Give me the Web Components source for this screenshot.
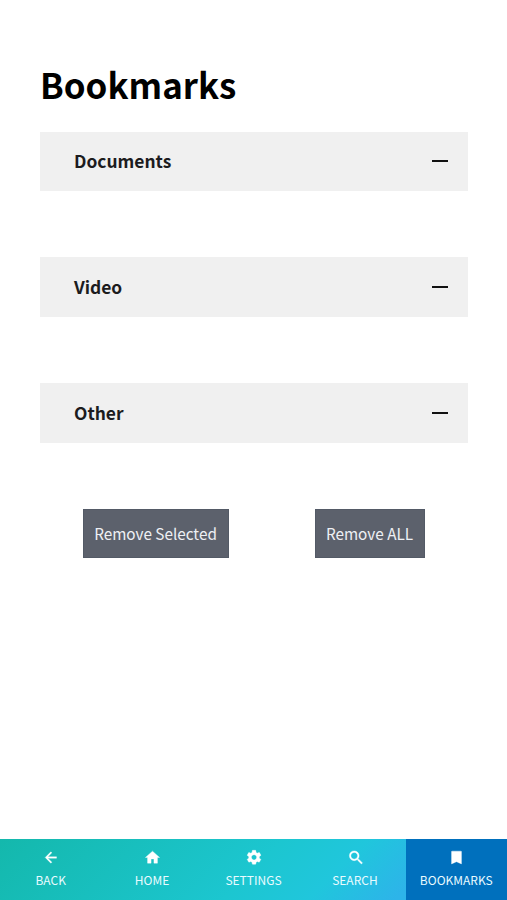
<!DOCTYPE html>
<html lang="en">
<head>
<meta charset="utf-8">
<title>Bookmarks</title>
<style>
html, body { margin: 0; height: 100%; }
body { background: #fff; font-family: "Noto Sans CJK SC", "Noto Sans", sans-serif; }
</style>
</head>
<body>
<bookmarks-page></bookmarks-page>
<script>
const define = (name, html) => {
  const t = document.createElement('template');
  t.innerHTML = html;
  customElements.define(name, class extends HTMLElement {
    constructor() {
      super();
      this.attachShadow({ mode: 'open' }).append(t.content.cloneNode(true));
    }
  });
};

define('bookmark-section', `
<style>
:host { display: flex; align-items: center; justify-content: space-between; box-sizing: border-box;
  height: 59.7px; padding: 0 20px 0 34px; background: #f0f0f0; color: #1c1c1e; }
h2 { margin: 0 0 .6px; font-size: 17.4px; line-height: 24px; font-weight: 700; }
svg { display: block; margin-bottom: 1px; }
</style>
<h2><slot></slot></h2>
<svg width="16" height="4" viewBox="0 0 16 4"><path d="M0 2H16" stroke="#111" stroke-width="2"/></svg>`);

define('action-button', `
<style>
:host { display: block; }
button { display: block; box-sizing: border-box; width: 100%; height: 49px; margin: 0; padding: 0 1px 1px 0; border: 1px solid #535a66;
  background: #5c616c; color: #eef0f4; font: 400 15.3px/46px "Noto Sans CJK SC", "Noto Sans", sans-serif; white-space: nowrap; }
</style>
<button><slot></slot></button>`);

define('nav-tab', `
<style>
:host { display: flex; flex-direction: column; align-items: center; min-width: 0; color: #e9fbff; }
:host([active]) { background: #0070bd; }
.icon { height: 16px; margin-top: 10px; }
.label { margin-top: 6px; font-size: 12px; line-height: 18px; white-space: nowrap; }
</style>
<div class="icon"><slot name="icon"></slot></div>
<div class="label"><slot></slot></div>`);

define('nav-bar', `
<style>
:host { display: grid; grid-template-columns: repeat(5, 1fr); height: 61.5px;
  background: linear-gradient(135deg, #14b8ac 0%, #1cc6d0 50%, #20c6dc 65%, #2db4e9 80%, #2db4e9 100%); }
</style>
<slot></slot>`);

define('bookmarks-page', `
<style>
:host { display: flex; flex-direction: column; height: 100vh; }
main { flex: 1; padding: 59px 39px 0 40px; }
h1 { margin: 0; font-size: 34.9px; line-height: 50px; font-weight: 700; color: #000; }
.sections { display: grid; gap: 66.1px; margin-top: 22.7px; }
.actions { display: flex; gap: 86px; margin: 66px 0 0 43px; }
.selected { width: 146px; }
.all { width: 110px; }
svg { display: block; fill: #fff; stroke: #fff; stroke-width: .5; }
</style>
<main>
  <h1>Bookmarks</h1>
  <div class="sections">
    <bookmark-section>Documents</bookmark-section>
    <bookmark-section>Video</bookmark-section>
    <bookmark-section>Other</bookmark-section>
  </div>
  <div class="actions">
    <action-button class="selected">Remove Selected</action-button>
    <action-button class="all">Remove ALL</action-button>
  </div>
</main>
<nav-bar>
  <nav-tab><svg slot="icon" width="17" height="17" viewBox="-.5 0 24 24"><path d="M20 11H7.83l5.59-5.59L12 4l-8 8 8 8 1.41-1.41L7.83 13H20v-2z"/></svg>BACK</nav-tab>
  <nav-tab><svg slot="icon" width="17" height="17" viewBox="0 0 24 24"><path d="M10 20v-6h4v6h5v-8h3L12 3 2 12h3v8z"/></svg>HOME</nav-tab>
  <nav-tab><svg slot="icon" width="17.5" height="17.5" viewBox="-.4 .6 24 24"><path d="M19.14 12.94c.04-.3.06-.61.06-.94 0-.32-.02-.64-.07-.94l2.03-1.58c.18-.14.23-.41.12-.61l-1.92-3.32c-.12-.22-.37-.29-.59-.22l-2.39.96c-.5-.38-1.03-.7-1.62-.94l-.36-2.54c-.04-.24-.24-.41-.48-.41h-3.84c-.24 0-.43.17-.47.41l-.36 2.54c-.59.24-1.13.57-1.62.94l-2.39-.96c-.22-.08-.47 0-.59.22L2.74 8.87c-.12.21-.08.47.12.61l2.03 1.58c-.05.3-.09.63-.09.94s.02.64.07.94l-2.03 1.58c-.18.14-.23.41-.12.61l1.92 3.32c.12.22.37.29.59.22l2.39-.96c.5.38 1.03.7 1.62.94l.36 2.54c.05.24.24.41.48.41h3.84c.24 0 .44-.17.47-.41l.36-2.54c.59-.24 1.13-.56 1.62-.94l2.39.96c.22.08.47 0 .59-.22l1.92-3.32c.12-.22.07-.47-.12-.61l-2.01-1.58zM12 15.6c-1.98 0-3.6-1.62-3.6-3.6s1.62-3.6 3.6-3.6 3.6 1.62 3.6 3.6-1.62 3.6-3.6 3.6z"/></svg>SETTINGS</nav-tab>
  <nav-tab><svg slot="icon" width="18" height="18" viewBox="-1.5 .5 24 24"><path d="M15.5 14h-.79l-.28-.27A6.471 6.471 0 0 0 16 9.5 6.5 6.5 0 1 0 9.5 16c1.61 0 3.09-.59 4.23-1.57l.27.28v.79l5 4.99L20.49 19l-4.99-5zm-6 0C7.01 14 5 11.99 5 9.5S7.01 5 9.5 5 14 7.01 14 9.5 11.99 14 9.5 14z"/></svg>SEARCH</nav-tab>
  <nav-tab active><svg slot="icon" width="17" height="17" viewBox="0 0 24 24"><path d="M18.5 3H5.5c-.3 0-.5.2-.5.5V21l7-3 7 3V3.5c0-.3-.2-.5-.5-.5z"/></svg>BOOKMARKS</nav-tab>
</nav-bar>`);
</script>
</body>
</html>
